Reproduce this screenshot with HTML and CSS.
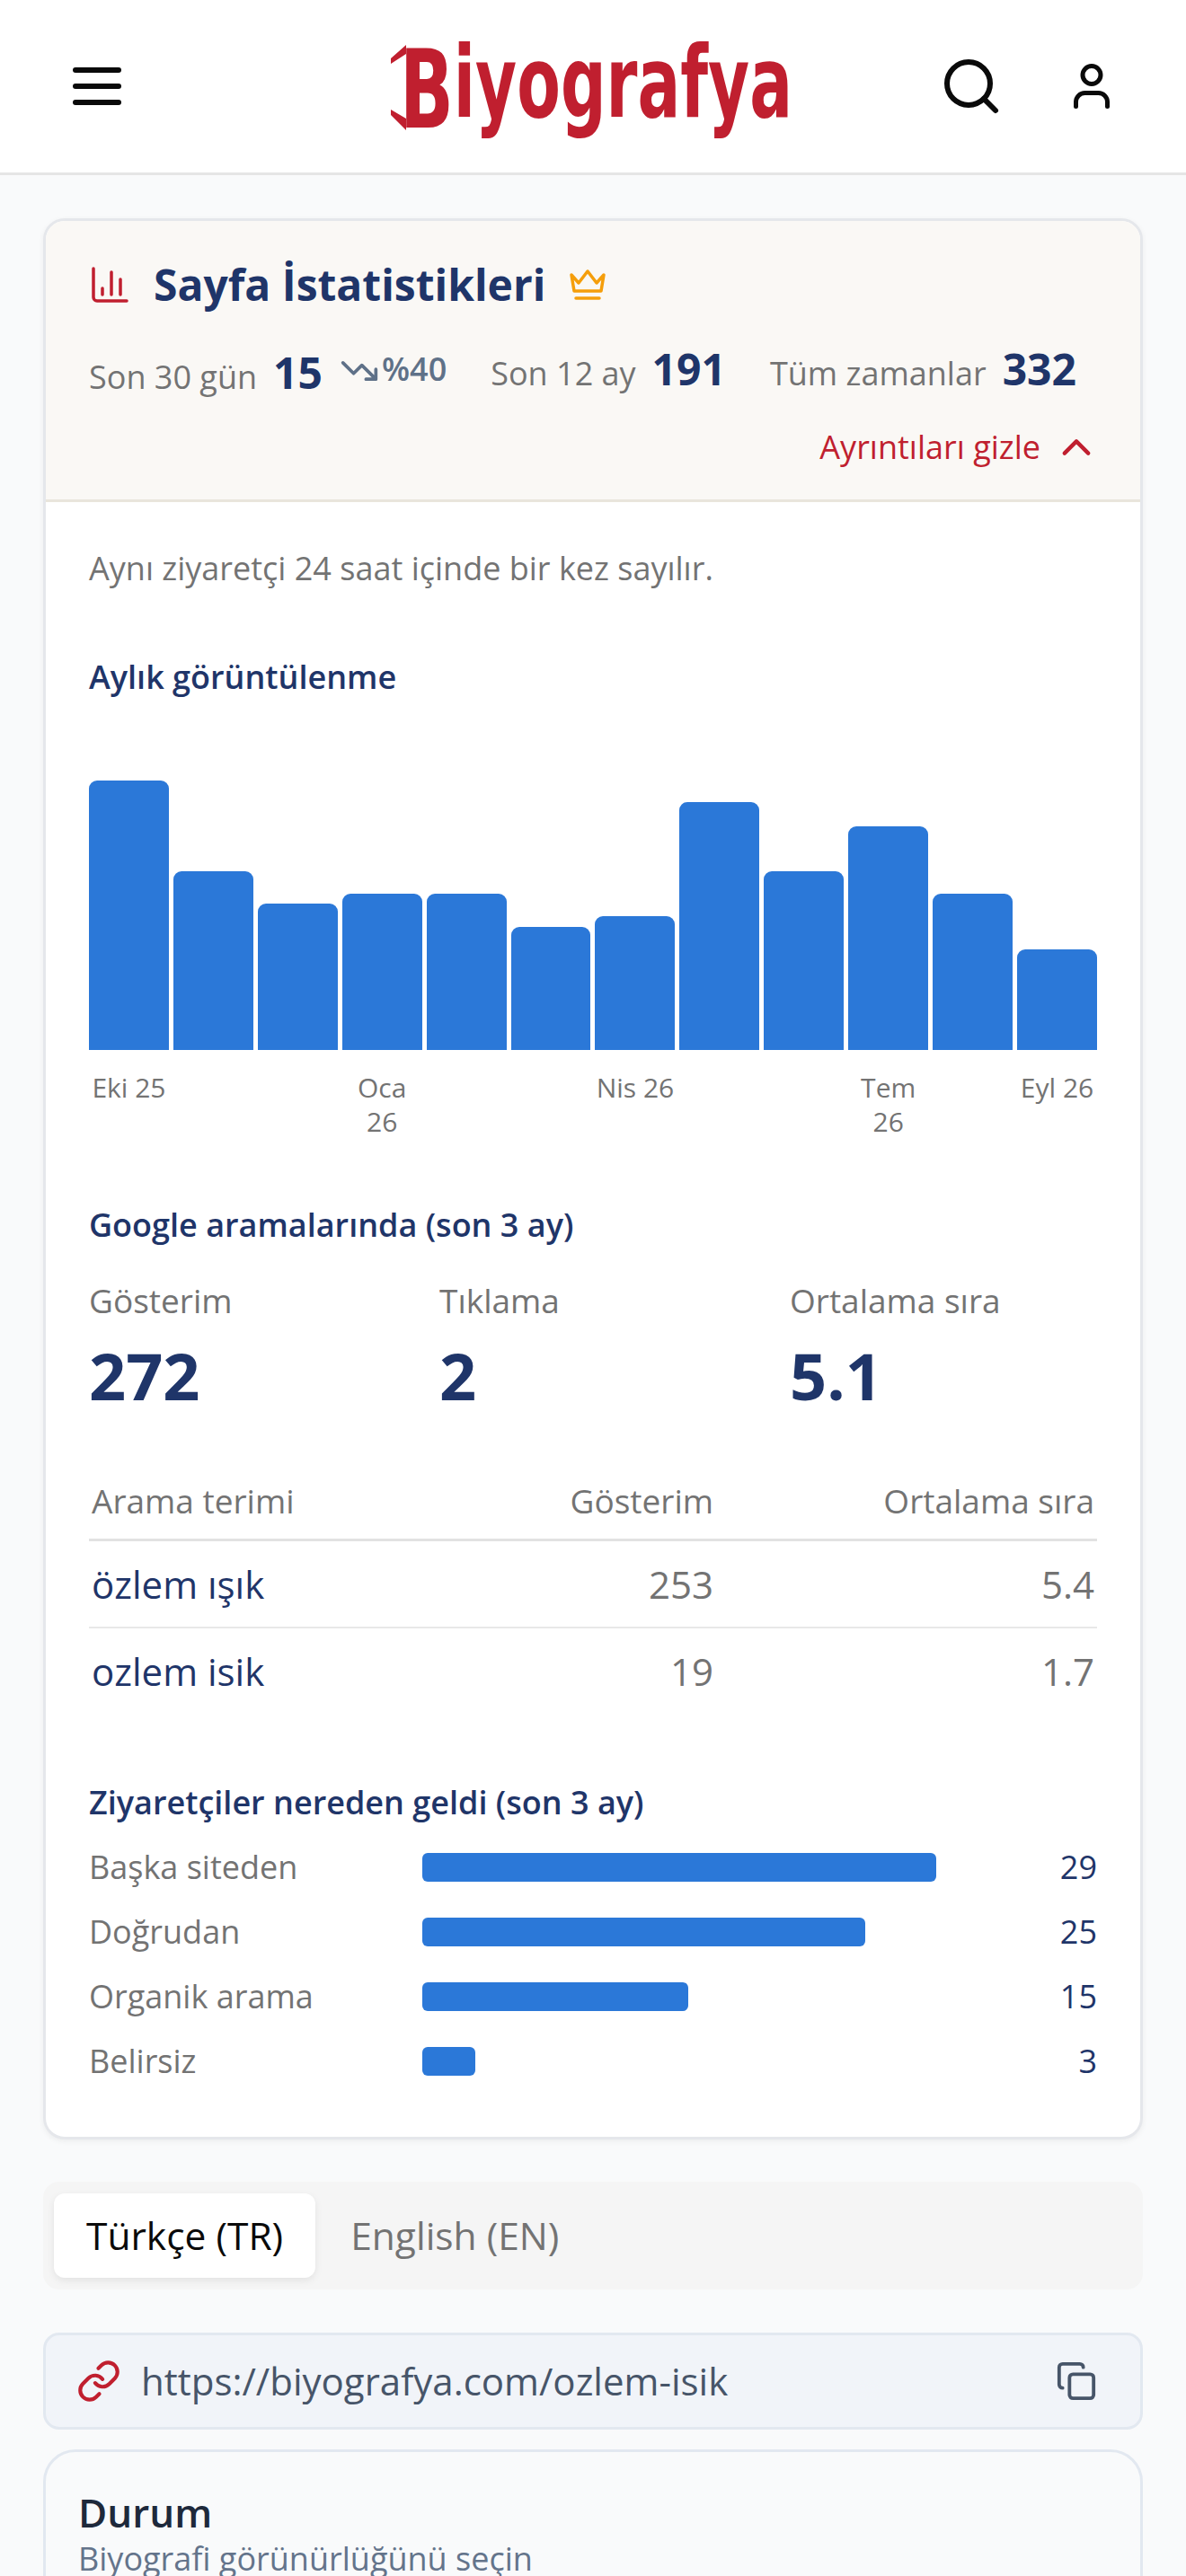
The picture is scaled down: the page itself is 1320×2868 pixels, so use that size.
FILE: index.html
```html
<!DOCTYPE html>
<html lang="tr">
<head>
  <meta charset="UTF-8">
  <meta name="viewport" content="width=device-width, initial-scale=1.0">
  <title>Biyografya - Sayfa İstatistikleri</title>
  <link rel="stylesheet" href="styles.css">
</head>
<body>
  <div class="page">
    <header class="topbar">
      <div class="menu-btn"><span></span><span></span><span></span></div>
      <svg class="logo" viewBox="0 0 447 100" width="447" height="100">
        <path class="logo-wing" d="M0 17 L17 2 V12 L0 23 Z M0 74 L17 84 V97 L0 80 Z"/>
        <text class="logo-text" x="10" textLength="437" lengthAdjust="spacingAndGlyphs"><tspan class="logo-cap" y="94">B</tspan><tspan class="logo-rest" y="82">iyografya</tspan></text>
      </svg>
      <svg class="icon-search" viewBox="0 0 24 24" width="72" height="72"><circle cx="11" cy="11" r="8"/><path d="M21 21l-4.35-4.35"/></svg>
      <svg class="icon-user" viewBox="0 0 24 24" width="60" height="60"><path d="M19 21v-2a4 4 0 0 0-4-4H9a4 4 0 0 0-4 4v2"/><circle cx="12" cy="7" r="4"/></svg>
    </header>

    <main class="content">
      <section class="stats-card">
        <div class="stats-head">
          <div class="title-row">
            <svg class="icon-chart" viewBox="0 0 40 40" width="40" height="40"><path d="M2 2V34a4 4 0 0 0 4 4H39M12 24V31M22 6V31M32 14V31"/></svg>
            <h2>Sayfa İstatistikleri</h2>
            <svg class="icon-crown" viewBox="0 0 40 34" width="40" height="34"><path d="M2 6L10 15L20 2L30 15L38 6L35 24H5ZM7 32H33"/></svg>
          </div>
          <div class="totals">
            <div class="total">
              <span class="total-label">Son 30 gün</span><span class="total-num">15</span><svg class="icon-trend" viewBox="0 0 24 24" width="44" height="44"><path d="M22 17L13.5 8.5L8.5 13.5L2 7M16 17H22V11"/></svg><span class="trend-val">%40</span>
            </div>
            <div class="total">
              <span class="total-label">Son 12 ay</span><span class="total-num">191</span>
            </div>
            <div class="total">
              <span class="total-label">Tüm zamanlar</span><span class="total-num">332</span>
            </div>
          </div>
          <div class="toggle-row">
            <span>Ayrıntıları gizle</span>
            <svg class="icon-chevron" viewBox="4 7 16 10" width="36" height="22"><path d="M18 15L12 9L6 15"/></svg>
          </div>
        </div>

        <div class="stats-body">
          <p class="note">Aynı ziyaretçi 24 saat içinde bir kez sayılır.</p>

          <h3 class="sub-title first">Aylık görüntülenme</h3>
          <div class="chart">
            <div class="bar" style="height:300px"></div>
            <div class="bar" style="height:199px"></div>
            <div class="bar" style="height:163px"></div>
            <div class="bar" style="height:174px"></div>
            <div class="bar" style="height:174px"></div>
            <div class="bar" style="height:137px"></div>
            <div class="bar" style="height:149px"></div>
            <div class="bar" style="height:276px"></div>
            <div class="bar" style="height:199px"></div>
            <div class="bar" style="height:249px"></div>
            <div class="bar" style="height:174px"></div>
            <div class="bar" style="height:112px"></div>
          </div>
          <div class="chart-labels">
            <span>Eki 25</span><span></span><span></span>
            <span>Oca 26</span><span></span><span></span>
            <span>Nis 26</span><span></span><span></span>
            <span>Tem 26</span><span></span>
            <span>Eyl 26</span>
          </div>

          <h3 class="sub-title">Google aramalarında (son 3 ay)</h3>
          <div class="search-stats">
            <div><div class="search-label">Gösterim</div><div class="search-num">272</div></div>
            <div><div class="search-label">Tıklama</div><div class="search-num">2</div></div>
            <div><div class="search-label">Ortalama sıra</div><div class="search-num">5.1</div></div>
          </div>

          <table class="terms">
            <thead>
              <tr><th>Arama terimi</th><th class="num col-views">Gösterim</th><th class="num col-rank">Ortalama sıra</th></tr>
            </thead>
            <tbody>
              <tr><td class="term">özlem ışık</td><td class="num">253</td><td class="num">5.4</td></tr>
              <tr><td class="term">ozlem isik</td><td class="num">19</td><td class="num">1.7</td></tr>
            </tbody>
          </table>

          <h3 class="sub-title after-table">Ziyaretçiler nereden geldi (son 3 ay)</h3>
          <div class="sources">
            <div class="source"><span class="source-name">Başka siteden</span><div class="source-track"><div class="source-bar" style="width:100%"></div></div><span class="source-num">29</span></div>
            <div class="source"><span class="source-name">Doğrudan</span><div class="source-track"><div class="source-bar" style="width:86.2%"></div></div><span class="source-num">25</span></div>
            <div class="source"><span class="source-name">Organik arama</span><div class="source-track"><div class="source-bar" style="width:51.7%"></div></div><span class="source-num">15</span></div>
            <div class="source"><span class="source-name">Belirsiz</span><div class="source-track"><div class="source-bar" style="width:10.4%"></div></div><span class="source-num">3</span></div>
          </div>
        </div>
      </section>

      <div class="lang-tabs">
        <div class="lang-tab active">Türkçe (TR)</div>
        <div class="lang-tab">English (EN)</div>
      </div>

      <div class="url-box">
        <svg class="icon-link" viewBox="0 0 24 24" width="50" height="50"><path d="M10 13a5 5 0 0 0 7.54.54l3-3a5 5 0 0 0-7.07-7.07l-1.72 1.71"/><path d="M14 11a5 5 0 0 0-7.54-.54l-3 3a5 5 0 0 0 7.07 7.07l1.71-1.71"/></svg>
        <span class="url-text">https://biyografya.com/ozlem-isik</span>
        <svg class="icon-copy" viewBox="0 0 24 24" width="46" height="46"><rect x="8" y="8" width="14" height="14" rx="2"/><path d="M4 16c-1.1 0-2-.9-2-2V4c0-1.1.9-2 2-2h10c1.1 0 2 .9 2 2"/></svg>
      </div>

      <section class="status-card">
        <h4>Durum</h4>
        <p>Biyografi görünürlüğünü seçin</p>
      </section>
    </main>
  </div>
</body>
</html>
```

FILE: styles.css
```css
* {
  box-sizing: border-box;
}

body {
  margin: 0;
  background: #f9fafb;
  font-family: "Open Sans", "Noto Sans", sans-serif;
  color: #1f3569;
}

h2, h3, h4, p {
  margin: 0;
}

svg {
  fill: none;
  flex-shrink: 0;
  overflow: visible;
}

.page {
  height: 2868px;
  overflow: hidden;
}

/* header */
.topbar {
  height: 195px;
  background: #fff;
  border-bottom: 3px solid #e5e5e5;
  display: flex;
  align-items: center;
  padding-left: 81px;
}

.menu-btn {
  width: 54px;
  display: flex;
  flex-direction: column;
  gap: 12px;
}

.menu-btn span {
  height: 6px;
  border-radius: 3px;
  background: #0a0a0a;
}

.logo {
  margin-left: 300px;
  margin-top: 3px;
}

.logo-wing {
  fill: #c01f2f;
}

.logo-text {
  fill: #c01f2f;
  font-family: "DejaVu Sans", sans-serif;
  font-weight: 700;
}

.logo-cap {
  font-size: 122px;
}

.logo-rest {
  font-size: 110px;
}

.icon-search {
  margin-left: 163px;
  stroke: #0a0a0a;
  stroke-width: 2;
  stroke-linecap: round;
}

.icon-user {
  margin-left: 68px;
  stroke: #0a0a0a;
  stroke-width: 2;
  stroke-linecap: round;
}

.content {
  padding: 48px;
}

/* stats card */
.stats-card {
  background: #fff;
  border: 3px solid #e5e7eb;
  border-radius: 24px;
  overflow: hidden;
  box-shadow: 0 2px 6px rgba(0, 0, 0, .06);
}

.stats-head {
  background: #faf8f5;
  border-bottom: 3px solid #e9e5dc;
  padding: 41px 48px 33px;
}

.title-row {
  display: flex;
  align-items: center;
  height: 60px;
}

.title-row h2 {
  font-size: 48px;
  font-weight: 700;
  line-height: 60px;
  margin-left: 29px;
}

.icon-chart {
  margin-left: 3px;
  stroke: #c01f2f;
  stroke-width: 3.5;
  stroke-linecap: round;
  stroke-linejoin: round;
}

.icon-crown {
  margin-left: 27px;
  stroke: #f59e0b;
  stroke-width: 3.5;
  stroke-linecap: round;
  stroke-linejoin: round;
}

.totals {
  display: flex;
  gap: 49px;
  margin-top: 34px;
  height: 60px;
  line-height: 60px;
  white-space: nowrap;
}

.total-label {
  font-size: 36px;
  color: #737373;
}

.total-num {
  font-size: 48px;
  font-weight: 700;
  margin-left: 18px;
}

.icon-trend {
  margin-left: 19px;
  stroke: #5f7188;
  stroke-width: 2;
  stroke-linecap: round;
  stroke-linejoin: round;
  vertical-align: -2px;
}

.trend-val {
  font-size: 36px;
  font-weight: 600;
  color: #5f7188;
  margin-left: 3px;
  vertical-align: 9px;
}

.toggle-row {
  display: flex;
  justify-content: flex-end;
  align-items: center;
  gap: 22px;
  margin-top: 32px;
  padding-right: 5px;
  font-size: 36px;
  line-height: 50px;
  color: #c01f2f;
}

.icon-chevron {
  stroke: #c01f2f;
  stroke-width: 2;
  stroke-linecap: round;
  stroke-linejoin: round;
}

.stats-body {
  padding: 49px 48px 59px;
}

.note {
  font-size: 36px;
  line-height: 50px;
  color: #737373;
}

.sub-title {
  font-size: 36px;
  font-weight: 600;
  line-height: 48px;
  margin-top: 72px;
}

.sub-title.after-table {
  margin-top: 74px;
}

/* monthly chart */
.chart {
  display: grid;
  grid-template-columns: repeat(12, 1fr);
  column-gap: 5px;
  align-items: end;
  height: 300px;
  margin-top: 91px;
}

.bar {
  background: #2b78d8;
  border-radius: 9px 9px 0 0;
}

.chart-labels {
  display: grid;
  grid-template-columns: repeat(12, 1fr);
  column-gap: 5px;
  margin-top: 23px;
  font-size: 30px;
  line-height: 38px;
  color: #737373;
  text-align: center;
}

/* search numbers */
.search-stats {
  display: grid;
  grid-template-columns: repeat(3, 1fr);
  column-gap: 48px;
  margin-top: 35px;
}

.search-label {
  font-size: 37px;
  line-height: 50px;
  color: #737373;
}

.search-num {
  font-size: 72px;
  font-weight: 700;
  line-height: 90px;
  margin-top: 13px;
}

.terms {
  width: 100%;
  border-collapse: collapse;
  margin-top: 70px;
  font-size: 37px;
}

.terms th {
  font-weight: 400;
  color: #737373;
  text-align: left;
  line-height: 50px;
  padding: 0 3px 17px;
  border-bottom: 3px solid #e2e2e2;
}

.terms td {
  height: 97px;
  padding: 0 3px;
  color: #737373;
  border-bottom: 2px solid #e8e8e8;
}

.terms tr:last-child td {
  border-bottom: none;
}

.terms .term {
  color: #1f3569;
  font-size: 42px;
}

.terms td.num {
  font-size: 42px;
}

.terms .num {
  text-align: right;
}

.col-views {
  width: 260px;
}

.col-rank {
  width: 424px;
}

/* where visitors came from */
.sources {
  display: flex;
  flex-direction: column;
  gap: 22px;
  margin-top: 23px;
}

.source {
  display: grid;
  grid-template-columns: 371px 572px 1fr;
  align-items: center;
  font-size: 36px;
  line-height: 50px;
}

.source-name {
  color: #737373;
}

.source-bar {
  height: 32px;
  border-radius: 6px;
  background: #2b78d8;
}

.source-num {
  text-align: right;
}

/* language tabs */
.lang-tabs {
  display: flex;
  gap: 3px;
  margin-top: 47px;
  height: 120px;
  padding: 13px 12px;
  background: #f5f5f5;
  border-radius: 18px;
}

.lang-tab {
  display: flex;
  align-items: center;
  padding: 0 36px;
  font-size: 42.5px;
  font-weight: 500;
  color: #737373;
}

.lang-tab.active {
  background: #fff;
  border-radius: 12px;
  color: #0a0a0a;
  box-shadow: 0 3px 8px rgba(0, 0, 0, .08);
}

/* link box */
.url-box {
  display: flex;
  align-items: center;
  height: 108px;
  margin-top: 48px;
  padding: 0 48px 0 34px;
  background: #f1f4f9;
  border: 3px solid #e2e8f0;
  border-radius: 18px;
}

.icon-link {
  stroke: #c01f2f;
  stroke-width: 2;
  stroke-linecap: round;
  stroke-linejoin: round;
}

.url-text {
  flex: 1;
  margin-left: 22px;
  font-size: 42px;
  color: #475569;
}

.icon-copy {
  stroke: #475569;
  stroke-width: 2;
  stroke-linecap: round;
  stroke-linejoin: round;
}

/* status */
.status-card {
  margin-top: 22px;
  padding: 38px 36px;
  height: 400px;
  border: 3px solid #e2e8f0;
  border-radius: 36px;
}

.status-card h4 {
  font-size: 44px;
  font-weight: 600;
  line-height: 58px;
  color: #1e293b;
}

.status-card p {
  font-size: 36px;
  line-height: 46px;
  color: #64748b;
}
```
